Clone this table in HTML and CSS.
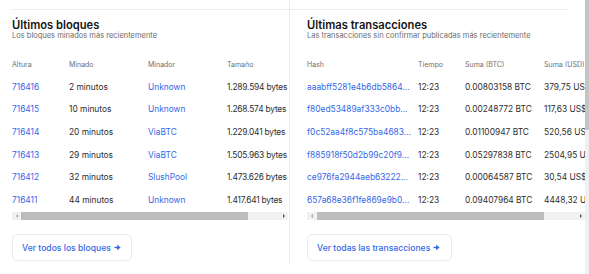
FILE: index.html
```html
<!DOCTYPE html>
<html lang="es">
<head>
<meta charset="utf-8">
<link rel="stylesheet" href="styles.css">
</head>
<body>
<div class="page">
  <div class="content">
    <section class="col col-left">
      <div class="rule"></div>
      <h2 class="title">Últimos bloques</h2>
      <p class="subtitle">Los bloques minados más recientemente</p>
      <div class="scroller">
        <div class="table blocks">
          <div class="row head"><span>Altura</span><span>Minado</span><span>Minador</span><span>Tamaño</span></div>
          <div class="row"><a>716416</a><span>2 minutos</span><a>Unknown</a><span class="size">1.289.594 bytes</span></div>
          <div class="row"><a>716415</a><span>10 minutos</span><a>Unknown</a><span class="size">1.268.574 bytes</span></div>
          <div class="row"><a>716414</a><span>20 minutos</span><a>ViaBTC</a><span class="size">1.229.041 bytes</span></div>
          <div class="row"><a>716413</a><span>29 minutos</span><a>ViaBTC</a><span class="size">1.505.963 bytes</span></div>
          <div class="row"><a>716412</a><span>32 minutos</span><a>SlushPool</a><span class="size">1.473.626 bytes</span></div>
          <div class="row"><a>716411</a><span>44 minutos</span><a>Unknown</a><span class="size">1.417.641 bytes</span></div>
        </div>
      </div>
      <div class="hbar hbar-left">
        <div class="sb-btn"><div class="tri-l"></div></div>
        <div class="sb-thumb"></div>
        <div class="sb-btn sb-end"><div class="tri-r"></div></div>
      </div>
      <a class="more">Ver todos los bloques <svg class="arrow" viewBox="0 0 8 8" width="7" height="7"><path d="M0.5 4H5" stroke="currentColor" stroke-width="1.6"/><path d="M3.6 0.8L7.6 4L3.6 7.2Z" fill="currentColor"/></svg></a>
    </section>
    <section class="col col-right">
      <div class="rule rule-right"></div>
      <h2 class="title">Últimas transacciones</h2>
      <p class="subtitle">Las transacciones sin confirmar publicadas más recientemente</p>
      <div class="scroller">
        <div class="table txs">
          <div class="row head"><span>Hash</span><span>Tiempo</span><span>Suma (BTC)</span><span>Suma (USD)</span></div>
          <div class="row"><a>aaabff5281e4b6db5864...</a><span>12:23</span><span>0.00803158 BTC</span><span>379,75 US$</span></div>
          <div class="row"><a>f80ed53489af333c0bb...</a><span>12:23</span><span>0.00248772 BTC</span><span>117,63 US$</span></div>
          <div class="row"><a>f0c52aa4f8c575ba4683...</a><span>12:23</span><span>0.01100947 BTC</span><span>520,56 US$</span></div>
          <div class="row"><a>f885918f50d2b99c20f9...</a><span>12:23</span><span>0.05297838 BTC</span><span>2504,95 US$</span></div>
          <div class="row"><a>ce976fa2944aeb63222...</a><span>12:23</span><span>0.00064587 BTC</span><span>30,54 US$</span></div>
          <div class="row"><a>657a68e36f1fe869e9b0...</a><span>12:23</span><span>0.09407964 BTC</span><span>4448,32 US$</span></div>
        </div>
      </div>
      <div class="hbar hbar-right">
        <div class="sb-btn"><div class="tri-l"></div></div>
        <div class="sb-thumb"></div>
        <div class="sb-btn sb-end"><div class="tri-r"></div></div>
      </div>
      <a class="more">Ver todas las transacciones <svg class="arrow" viewBox="0 0 8 8" width="7" height="7"><path d="M0.5 4H5" stroke="currentColor" stroke-width="1.6"/><path d="M3.6 0.8L7.6 4L3.6 7.2Z" fill="currentColor"/></svg></a>
    </section>
  </div>
  <div class="vbar"><div class="vthumb"></div></div>
</div>
</body>
</html>
```

FILE: styles.css
```css
* { box-sizing: border-box; }
html, body { margin: 0; padding: 0; }
body {
  width: 589px;
  height: 274px;
  overflow: hidden;
  background: #fff;
  font-family: Inter, "Noto Sans", sans-serif;
  color: #2b2b2b;
}
.page {
  display: flex;
  width: 589px;
  height: 274px;
}
.content {
  flex: 1;
  display: flex;
  min-width: 0;
}
.col {
  display: flex;
  flex-direction: column;
  min-width: 0;
}
.col > * { flex-shrink: 0; }
.col-left {
  width: 290px;
  padding-left: 12px;
  padding-right: 1px;
  border-right: 1px solid #ececec;
  height: 265px;
}
.col-right {
  flex: 1;
  padding-left: 17px;
}
.rule {
  margin-top: 9px;
  height: 1px;
  background: #ececec;
  margin-right: -2px;
}
.rule-right {
  margin-left: -17px;
  margin-right: 18px;
}
.title {
  margin: 9px 0 0;
  font-size: 11.2px;
  line-height: 12px;
  font-weight: 600;
  color: #141414;
}
.subtitle {
  margin: 0;
  font-size: 7.5px;
  line-height: 9px;
  color: #6b6b6b;
}
.scroller {
  margin-top: 13px;
  overflow: hidden;
}
.table {
  display: flex;
  flex-direction: column;
  font-size: 8.4px;
}
.row {
  display: grid;
  height: 22.6px;
  align-items: center;
  white-space: nowrap;
}
.blocks .row { grid-template-columns: 57px 79px 79px 90px; }
.txs .row { grid-template-columns: 111px 47px 79px 90px; }
.row.head {
  font-size: 7px;
  color: #6f6f6f;
}
.row a { color: #3568e8; }
.row span { color: #2e2e2e; }
.row.head span { color: #6f6f6f; }
.row .size { letter-spacing: -0.2px; }
.hbar {
  display: flex;
  height: 8px;
  margin-top: 1px;
  background: #f1f1f1;
}
.sb-btn {
  width: 9px;
  height: 8px;
  display: flex;
  align-items: center;
  justify-content: center;
}
.sb-end { margin-left: auto; }
.sb-thumb {
  width: 227px;
  height: 8px;
  background: #bdbdbd;
}
.hbar-right .sb-thumb { margin-left: 1px; }
.tri-l {
  width: 0; height: 0;
  border-top: 2px solid transparent;
  border-bottom: 2px solid transparent;
  border-right: 2px solid #a3a3a3;
}
.tri-r {
  width: 0; height: 0;
  border-top: 2px solid transparent;
  border-bottom: 2px solid transparent;
  border-left: 2px solid #505050;
}
.more {
  align-self: flex-start;
  margin-top: 14px;
  height: 27px;
  padding: 0 9px;
  display: flex;
  align-items: center;
  gap: 3px;
  border: 1px solid #e9e9ee;
  border-radius: 5px;
  color: #3568e8;
  font-size: 8.6px;
  font-weight: 500;
}
.col-left .more { width: 120px; }
.col-right .more { width: 145px; }
.arrow { display: block; }
.vbar {
  width: 4px;
  height: 274px;
  background: #f0f0f0;
  flex-shrink: 0;
}
.vthumb {
  height: 130px;
  background: #c4c4c4;
}
```
